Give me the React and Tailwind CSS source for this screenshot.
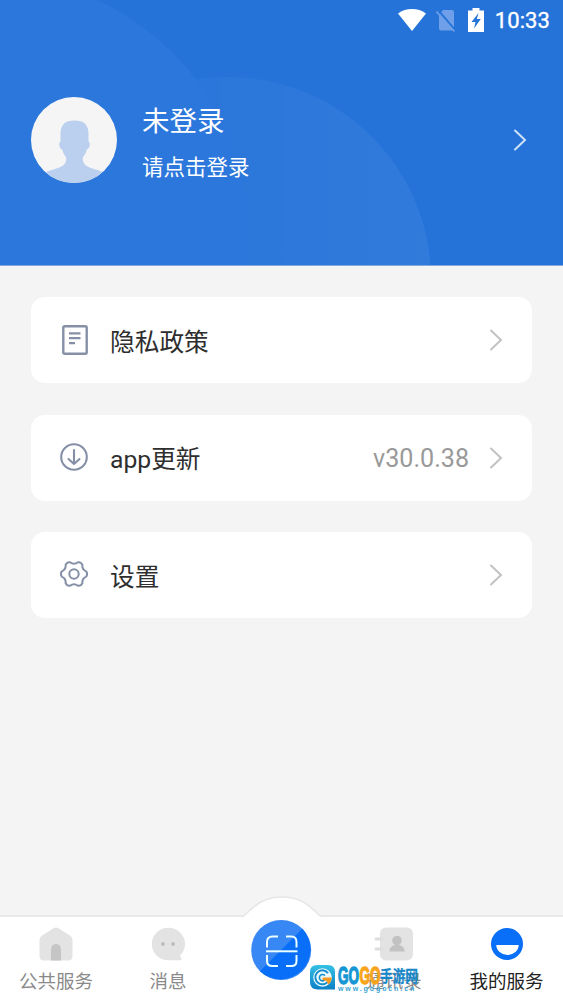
import React from 'react';

const menuItems = [
  { label: '隐私政策', icon: DocIcon },
  { label: 'app更新', icon: DownloadIcon, value: 'v30.0.38' },
  { label: '设置', icon: GearIcon },
];

function DocIcon() {
  return (
    <svg width="26" height="30" viewBox="0 0 26 30" fill="none" stroke="#8590a6" className="ml-px">
      <rect x="1.3" y="1.3" width="23.4" height="27.4" rx="1.5" strokeWidth="2.4" />
      <path d="M7 8.300h11.500M7 13.200h11.500M7 18.100h6" strokeWidth="2.300" />
    </svg>
  );
}

function DownloadIcon() {
  return (
    <svg width="28" height="28" viewBox="0 0 28 28" fill="none" stroke="#8590a6" strokeWidth="2.1" strokeLinecap="round" strokeLinejoin="round" className="-mt-0.5 -ml-px">
      <circle cx="14" cy="14" r="12.8" />
      <path d="M14 7v14M8.5 16l5.5 5 5.5-5" />
    </svg>
  );
}

function GearIcon() {
  return (
    <svg width="28" height="28" viewBox="0 0 28 28" fill="none" stroke="#8590a6" strokeWidth="2" strokeLinejoin="round" className="-mt-0.5">
      <path d="M17.900 2.300Q20.700 1.500 22.400 4.700Q21.800 9.500 26.200 11.400Q28 14 26.200 16.600Q21.800 18.500 22.400 23.300Q20.700 26.500 17.900 25.700Q14 22.800 10.100 25.700Q7.300 26.500 5.600 23.300Q6.200 18.500 1.800 16.600Q0 14 1.800 11.400Q6.200 9.500 5.600 4.700Q7.300 1.500 10.100 2.300Q14 5.200 17.900 2.300Z" />
      <circle cx="14" cy="14" r="4.700" />
    </svg>
  );
}

function Chevron({ className }) {
  return (
    <svg width="14" height="22" viewBox="0 0 14 22" fill="none" stroke="currentColor" strokeWidth="2" strokeLinecap="round" className={className}>
      <path d="M2 1.5 12 11 2 20.5" />
    </svg>
  );
}

function StatusBar() {
  return (
    <div className="flex h-10 items-center justify-end pr-[13px] text-white">
      <svg width="28" height="22" viewBox="0 0 28 22" fill="currentColor">
        <path d="M0 4.5C8-1.4 20-1.4 28 4.5L14 22Z" />
      </svg>
      <svg width="20" height="23" viewBox="0 0 20 23" className="ml-2.5">
        <path d="M7 1h9q2 0 2 2v18.500H5q-2 0-2-2V6Z" fill="#6f9fe8" />
        <path d="m2 1 18 21" stroke="#2574d9" strokeWidth="2" />
        <path d="m.5 2.500 18 20" stroke="#6f9fe8" strokeWidth="1.600" />
      </svg>
      <svg width="16" height="24" viewBox="0 0 16 24" className="ml-3">
        <path d="M4.500 0h7v2.500H16V24H0V2.500h4.500Z" fill="#fff" />
        <path d="M10.500 5 3.500 14h4l-1.500 6.500L12.800 11H8.800Z" fill="#2574d9" />
      </svg>
      <span className="ml-[11px] pt-0.5 font-[Roboto,sans-serif] text-[22px] leading-none tracking-[0.100px] [-webkit-text-stroke:0.350px_white]">10:33</span>
    </div>
  );
}

function Avatar() {
  return (
    <svg width="86" height="86" viewBox="0 0 86 86">
      <defs>
        <clipPath id="avatar">
          <circle cx="43" cy="43" r="43" />
        </clipPath>
      </defs>
      <g clipPath="url(#avatar)">
        <rect width="86" height="86" fill="#f5f5f6" />
        <path d="M43.500 23.500C34 23.500 29.500 28 29.500 36.500v8c-2.500 1-1 7.500 1.700 8 .8 3.500 2 5.500 3.800 7.500 1 5.500-2 8.500-6.500 10.500C22 73 17 73 12 77.500V88h63V77.500C70 73 65 73 58.500 70.500 54 68.500 51 65.500 52 60c1.800-2 3-4 3.800-7.500 2.700-.5 4.200-7 1.700-8v-8c0-8.500-4.500-13-14-13Z" fill="#bbd0ee" />
      </g>
    </svg>
  );
}

function Header() {
  return (
    <header className="relative h-[266px] overflow-hidden border-b border-[#82a9dc] bg-[#2573d9]">
      <svg width="563" height="266" viewBox="0 0 563 266" className="absolute inset-0">
        <defs>
          <linearGradient id="ring" x1="0" y1="0" x2="1" y2="0">
            <stop offset="0.300" stopColor="#fff" stopOpacity="0.015" />
            <stop offset="1" stopColor="#fff" stopOpacity="0.055" />
          </linearGradient>
        </defs>
        <circle cx="228" cy="280" r="203" fill="url(#ring)" />
        <circle cx="-10" cy="235" r="258" fill="#2c77dc" />
      </svg>
      <div className="relative">
        <StatusBar />
        <div className="mt-[57px] flex h-[86px] items-center pr-9 pl-[31px] text-white">
          <Avatar />
          <div className="ml-[25px] flex-1 pt-1.5">
            <div className="text-[27.500px] leading-[40px]">未登录</div>
            <div className="mt-2.5 text-[21.500px] leading-[32px]">请点击登录</div>
          </div>
          <Chevron className="text-[#d0e0f7]" />
        </div>
      </div>
    </header>
  );
}

function MenuCard({ item }) {
  const Icon = item.icon;
  return (
    <div className="flex h-[86px] items-center rounded-[14px] bg-white pr-[29px] text-[#2e2e2e]">
      <div className="ml-7 flex w-[30px] justify-center">
        <Icon />
      </div>
      <span className="ml-[21px] flex-1 pt-[5px] text-[24.700px] leading-9">{item.label}</span>
      {item.value && <span className="mr-5 pt-[3px] text-[25.100px] text-[#999]">{item.value}</span>}
      <Chevron className="text-[#c2c2c2]" />
    </div>
  );
}

function HomeIcon() {
  return (
    <svg width="34" height="34" viewBox="0 0 34 34">
      <path d="M14.500 1.200q2.500-1.500 5 0L31.500 9Q33.500 10.500 33.500 13v16q0 4.500-4.500 4.500H5Q.5 33.500.5 29V13Q.5 10.500 2.500 9Z" fill="#e3e3e3" />
      <path d="M12 33.500V22a5 5 0 0 1 10 0v11.500Z" fill="#c5c5c5" />
    </svg>
  );
}

function MessageIcon() {
  return (
    <svg width="34" height="34" viewBox="0 0 34 34">
      <path d="M17 .8a16.200 16.200 0 1 0 0 32.400h12.500q2 0 .5-2.500l-1-2A16.200 16.200 0 0 0 17 .8Z" fill="#e3e3e3" />
      <circle cx="12" cy="17" r="1.900" fill="#bdbdbd" />
      <circle cx="22" cy="17" r="1.900" fill="#bdbdbd" />
    </svg>
  );
}

function ContactsIcon() {
  return (
    <svg width="40" height="34" viewBox="0 0 40 34">
      <rect x="6" y="0.500" width="33" height="33" rx="6" fill="#e3e3e3" />
      <path d="M2 12h6M2 22h6" stroke="#dedede" strokeWidth="3" strokeLinecap="round" />
      <circle cx="23" cy="13.500" r="4.800" fill="#c2c2c2" />
      <path d="M15.500 24.500c0-4 2.500-6 5.500-6.500h4c3 .5 5.500 2.500 5.500 6.500Z" fill="#c2c2c2" />
    </svg>
  );
}

function MineIcon() {
  return (
    <svg width="34" height="34" viewBox="0 0 34 34">
      <circle cx="17" cy="17" r="16" fill="#096ef8" />
      <path d="M6.300 18h22.400a11.200 10 0 0 1-22.400 0Z" fill="#fff" />
    </svg>
  );
}

function Tab({ label, icon, active }) {
  return (
    <div className={active ? 'flex w-[113px] flex-col items-center text-[#222]' : 'flex w-[112px] flex-col items-center text-[#8a8a8a]'}>
      {icon}
      <span className="mt-1.5 text-[18.500px] leading-[30px] whitespace-nowrap">{label}</span>
    </div>
  );
}

function ScanButton() {
  return (
    <svg width="80" height="104" viewBox="0 0 80 104" className="absolute top-[-21px] left-[242px]">
      <path d="M0 21.500C4 20 5 16 9 13.500 25-3.300 55-3.300 71 13.500 75 16 76 20 80 21.500V25H0Z" fill="#fff" />
      <path d="M0 20.500C4 19 5 16 9 13.500 25-3.300 55-3.300 71 13.500 75 16 76 19 80 20.500" fill="none" stroke="#e6e6e6" strokeWidth="1.500" />
      <circle cx="39.200" cy="54" r="30" fill="#3787f4" />
      <path d="M60.400 32.800A30 30 0 0 1 18 75.200Z" fill="#096ef8" />
      <g fill="none" stroke="#eaffff" strokeWidth="2">
        <path d="M25 51.500V46q0-5.500 5.500-5.500H36M44 40.500h5.500q5 0 5 5.500v5.500M25 59v6q0 5 5.500 5H36M44 70h5.500q5 0 5-5v-6" />
        <path d="M24 55.300h31.500" />
      </g>
    </svg>
  );
}

function Watermark() {
  return (
    <div className="absolute top-12 left-[310px] flex h-[28px] w-[112px]">
      <svg width="26" height="25" viewBox="0 0 26 25" className="shrink-0">
        <defs>
          <linearGradient id="logo" x1="0" y1="0" x2="0" y2="1">
            <stop offset="0" stopColor="#35c1e4" />
            <stop offset="1" stopColor="#0a7fc6" />
          </linearGradient>
        </defs>
        <path d="M0 7Q0 0 7 0h11q7 0 7 7v17.500H8Q0 24.500 0 17Z" fill="url(#logo)" />
        <circle cx="12.500" cy="12.500" r="9.300" fill="#e9fbff" />
        <path d="M18 8.200a7 7 0 1 0 1 6.300" fill="none" stroke="#168dce" strokeWidth="2" />
        <path d="M15 10.500a3.200 3.200 0 1 0 .5 3.500" fill="none" stroke="#168dce" strokeWidth="1.600" />
        <path d="M12.500 12.500h9.300q-.3 4.500-3.500 7l-1.800-3.500-4-1Z" fill="#f59a23" />
      </svg>
      <div className="ml-0.5 w-[84px]">
        <svg width="84" height="20" viewBox="0 0 84 20" fontWeight="700" className="overflow-visible">
          <g fontFamily="Liberation Sans, sans-serif" fontSize="23">
            <text x="0" y="18.500" textLength="21" lengthAdjust="spacingAndGlyphs" fill="#1597d5" stroke="#1597d5" strokeWidth="1.400">GO</text>
            <text x="21.500" y="18.500" textLength="21" lengthAdjust="spacingAndGlyphs" fill="#f8a51b" stroke="#f8a51b" strokeWidth="1.400">GO</text>
          </g>
          <text x="42" y="17" fontFamily="Noto Sans CJK SC, sans-serif" fontSize="16" textLength="38" lengthAdjust="spacingAndGlyphs" fill="#1687c9" stroke="#1687c9" strokeWidth="0.300">手游网</text>
        </svg>
        <div className="mt-px font-['Liberation_Sans',sans-serif] text-[7px] leading-[6px] font-bold tracking-[1.900px] whitespace-nowrap text-[#38a5d5]">www.gogocn.cn</div>
      </div>
    </div>
  );
}

export default function App() {
  return (
    <div className="flex h-[1000px] w-[563px] flex-col overflow-hidden bg-[#f4f4f4] font-[Roboto,'Noto_Sans_CJK_SC',sans-serif]">
      <Header />
      <main className="flex flex-1 flex-col gap-[31.500px] px-[31px] pt-[31px]">
        {menuItems.map((item) => (
          <MenuCard key={item.label} item={item} />
        ))}
      </main>
      <nav className="relative flex h-[85px] border-t-2 border-[#e9e9e9] bg-white pt-2.5">
        <Tab label="公共服务" icon={<HomeIcon />} />
        <Tab label="消息" icon={<MessageIcon />} />
        <div className="w-[114px]" />
        <Tab label="通讯录" icon={<ContactsIcon />} />
        <Tab label="我的服务" icon={<MineIcon />} active />
        <ScanButton />
        <Watermark />
      </nav>
    </div>
  );
}
